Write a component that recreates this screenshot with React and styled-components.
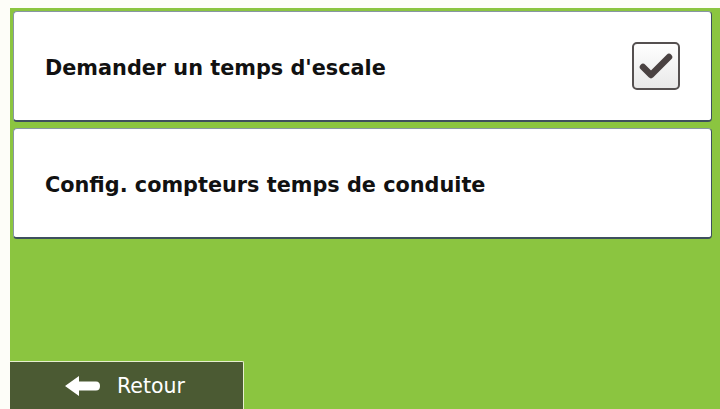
import styled, { createGlobalStyle } from "styled-components";

const Global = createGlobalStyle`
  html, body {
    margin: 0;
    padding: 0;
    background: #fdfdf8;
  }
  body {
    font-family: "DejaVu Sans", Verdana, sans-serif;
  }
`;

const Screen = styled.div`
  margin: 8px 0 0 10px;
  width: 710px;
  height: 401px;
  background: #8bc540;
  display: flex;
  flex-direction: column;
  box-sizing: border-box;
  padding-top: 3px;
`;

const List = styled.div`
  display: flex;
  flex-direction: column;
  gap: 6px;
  padding: 0 8px 0 3px;
`;

const Item = styled.div`
  height: 111px;
  box-sizing: border-box;
  background: #fff;
  border: 1px solid #8796a4;
  border-right-color: #3e4f5e;
  border-bottom: 2px solid #3e4f5e;
  border-radius: 4px;
  display: flex;
  align-items: center;
  justify-content: space-between;
  padding: 0 31px 0 31px;
`;

const Label = styled.span`
  font-size: 20.8px;
  font-weight: bold;
  color: #111;
  padding-top: 3px;
`;

const Check = styled.div`
  width: 48px;
  height: 48px;
  box-sizing: border-box;
  border: 2px solid #555050;
  border-radius: 5px;
  background: linear-gradient(#ffffff, #e9e9e9);
  display: flex;
  align-items: center;
  justify-content: center;
`;

const Footer = styled.div`
  margin-top: auto;
  display: flex;
`;

const BackButton = styled.button`
  width: 234px;
  height: 48px;
  box-sizing: border-box;
  background: #4b5a33;
  border: none;
  border-top: 1px solid #e6efcf;
  border-right: 1px solid #e6efcf;
  border-radius: 0 2px 0 0;
  color: #fff;
  font-family: "DejaVu Sans", Verdana, sans-serif;
  font-size: 20.5px;
  display: flex;
  align-items: center;
  gap: 16px;
  padding: 0 0 0 54px;
  cursor: pointer;
`;

function CheckMark() {
  return (
    <svg width="36" height="30" viewBox="0 0 36 30">
      <path
        d="M5 16 L13 24 L31 6"
        fill="none"
        stroke="#4a4242"
        strokeWidth="6.5"
        strokeLinecap="round"
        strokeLinejoin="round"
      />
    </svg>
  );
}

function BackArrow() {
  return (
    <svg width="37" height="22" viewBox="0 0 37 22">
      <path
        d="M1 11 L15 1 L15 6.5 L32 6.5 Q36 6.5 36 11 Q36 15.5 32 15.5 L15 15.5 L15 21 Z"
        fill="#fff"
      />
    </svg>
  );
}

export default function App() {
  return (
    <>
      <Global />
      <Screen>
        <List>
          <Item>
            <Label>Demander un temps d'escale</Label>
            <Check>
              <CheckMark />
            </Check>
          </Item>
          <Item>
            <Label>Config. compteurs temps de conduite</Label>
          </Item>
        </List>
        <Footer>
          <BackButton>
            <BackArrow />
            Retour
          </BackButton>
        </Footer>
      </Screen>
    </>
  );
}
